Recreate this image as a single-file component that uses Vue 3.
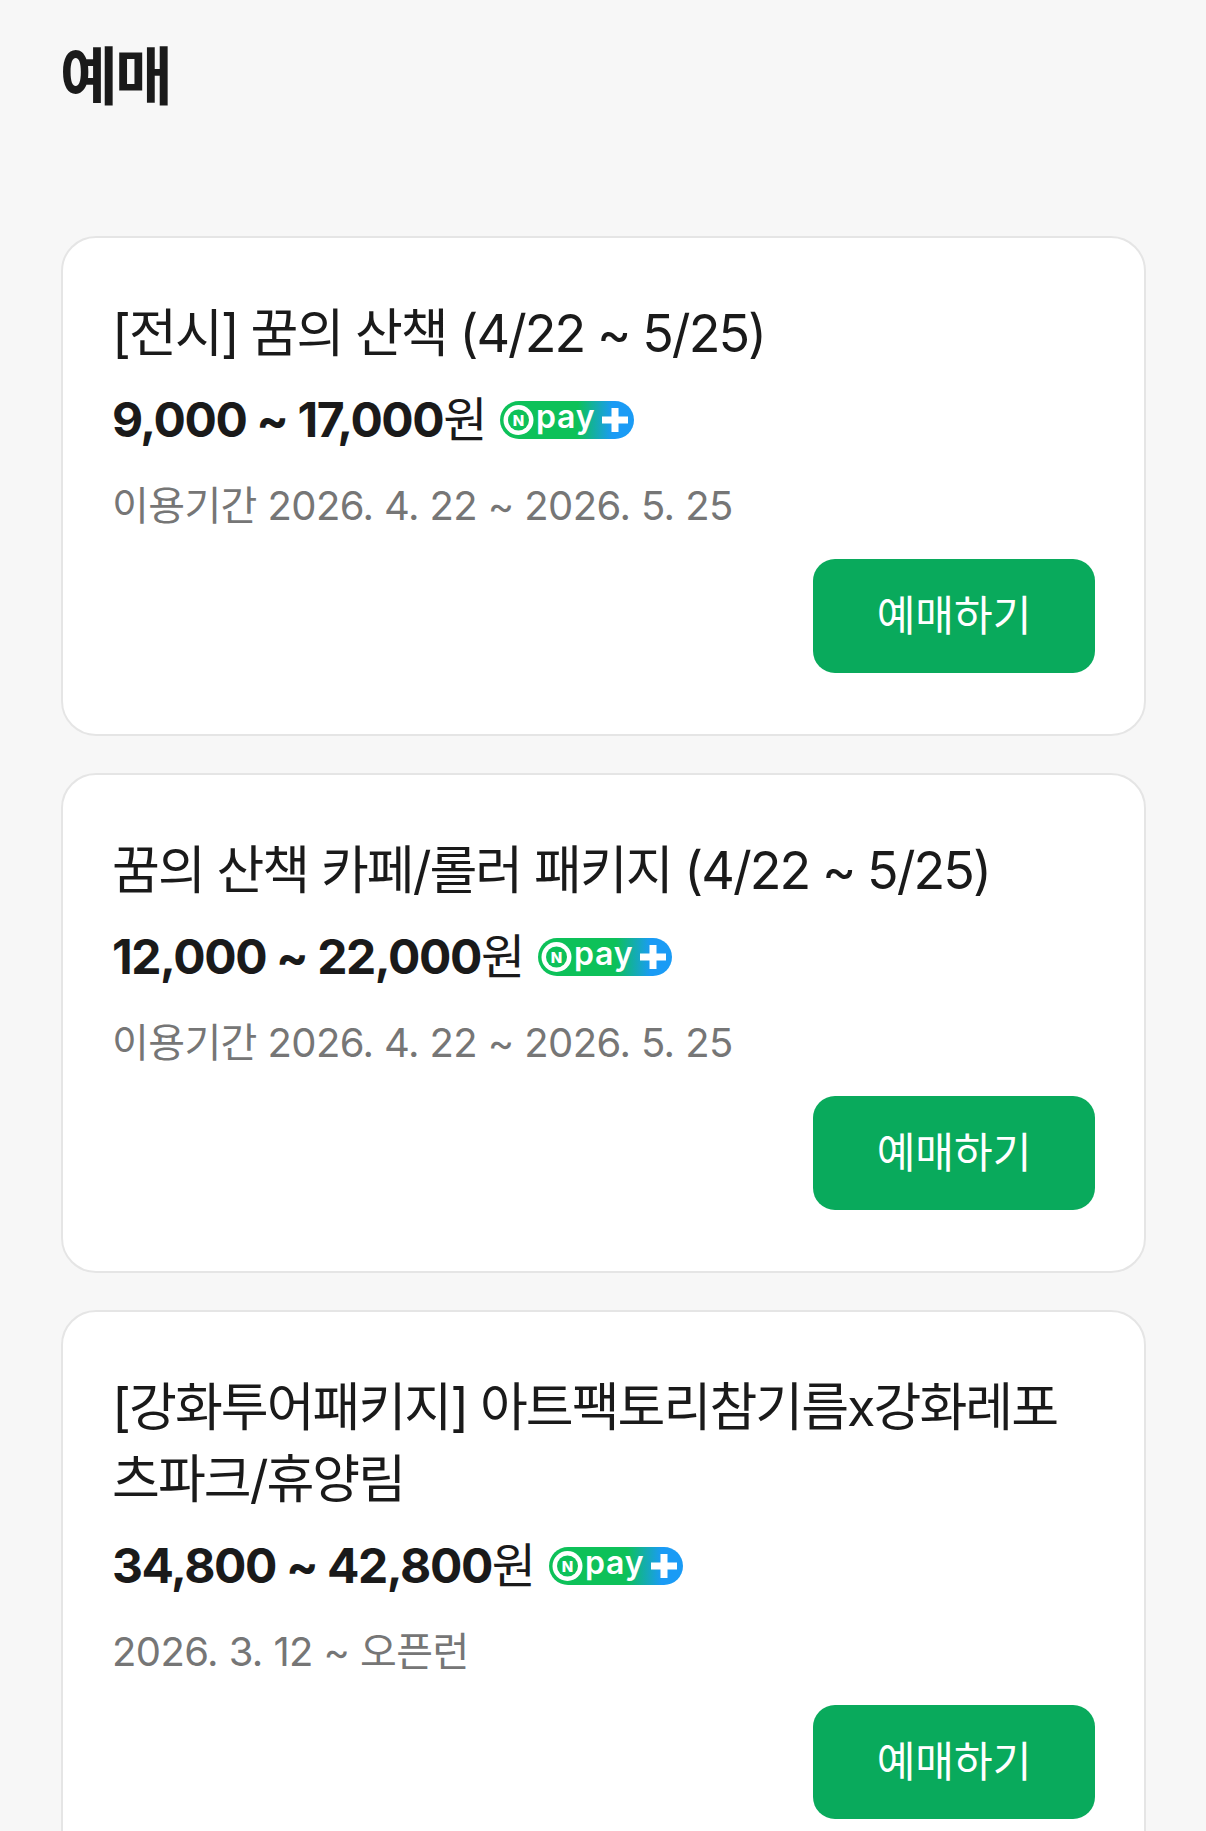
<script setup>
const items = [
  { title: '[전시] 꿈의 산책 (4/22 ~ 5/25)', price: '9,000 ~ 17,000', period: '이용기간 2026. 4. 22 ~ 2026. 5. 25' },
  { title: '꿈의 산책 카페/롤러 패키지 (4/22 ~ 5/25)', price: '12,000 ~ 22,000', period: '이용기간 2026. 4. 22 ~ 2026. 5. 25' },
  { title: '[강화투어패키지] 아트팩토리참기름x강화레포츠파크/휴양림', price: '34,800 ~ 42,800', period: '2026. 3. 12 ~ 오픈런' },
]
</script>

<template>
  <div class="page">
    <h1 class="heading">예매</h1>
    <div class="list">
      <section v-for="(item, i) in items" :key="i" class="card">
        <h2 class="title">{{ item.title }}</h2>
        <div class="price-row">
          <span class="price"><b>{{ item.price }}</b>원</span>
          <svg class="npay" viewBox="0 -6 134 50" width="134" height="50" aria-label="N pay plus">
            <defs>
              <linearGradient id="npayg" x1="0" x2="1" y1="0" y2="0">
                <stop offset="0.58" stop-color="#0dc159" />
                <stop offset="0.84" stop-color="#1a9bf5" />
              </linearGradient>
            </defs>
            <rect x="0" y="0" width="134" height="38" rx="19" fill="url(#npayg)" />
            <circle cx="18.5" cy="19" r="15" fill="#fff" />
            <circle cx="18.5" cy="19" r="10.5" fill="#0dc159" />
            <text x="18.5" y="25" text-anchor="middle" class="n">N</text>
            <text x="36" y="27" class="pay">pay</text>
            <path d="M102 19h26M115 7v24" stroke="#fff" stroke-width="7" fill="none" />
          </svg>
        </div>
        <p class="period">{{ item.period }}</p>
        <div class="actions">
          <button class="buy" type="button">예매하기</button>
        </div>
      </section>
    </div>
  </div>
</template>

<style scoped>
.page {
  width: 1206px;
  height: 1831px;
  overflow: hidden;
  box-sizing: border-box;
  padding: 36px 60px 0 61px;
  background: #f7f7f7;
  font-family: Inter, "Noto Sans CJK KR", sans-serif;
  color: #1a1a1a;
}
.heading {
  margin: 0 0 0 -1px;
  font-size: 63px;
  line-height: 80px;
  font-weight: 700;
  letter-spacing: -3px;
  color: #1a1a1a;
}
.list {
  margin-top: 120px;
  display: flex;
  flex-direction: column;
  gap: 37px;
}
.card {
  box-sizing: border-box;
  width: 1085px;
  padding: 60px 49px 61px;
  background: #fff;
  border: 2px solid #e5e5e5;
  border-radius: 35px;
}
.title {
  margin: 0;
  padding-right: 20px;
  font-size: 52px;
  line-height: 72px;
  font-weight: 400;
  letter-spacing: -1.95px;
  color: #1a1a1a;
}
.price-row {
  margin-top: 15px;
  display: flex;
  align-items: center;
  gap: 12px;
}
.price {
  padding-right: 2px;
  font-size: 48px;
  line-height: 70px;
  letter-spacing: -1.42px;
}
.price b { font-weight: 700; }
.npay { display: block; flex: none; }
.n { font: 800 15px Inter, sans-serif; fill: #fff; }
.pay { font: 600 32px Inter, sans-serif; fill: #fff; letter-spacing: 0.8px; }
.period {
  margin: 21px 0 0;
  font-size: 40px;
  line-height: 60px;
  letter-spacing: -0.6px;
  color: #767676;
}
.actions {
  margin-top: 23px;
  display: flex;
  justify-content: flex-end;
}
.buy {
  width: 282px;
  height: 114px;
  border: 0;
  border-radius: 22px;
  background: #09aa5c;
  color: #fff;
  font-family: inherit;
  font-size: 42px;
  padding: 0 0 8px;
}
</style>
